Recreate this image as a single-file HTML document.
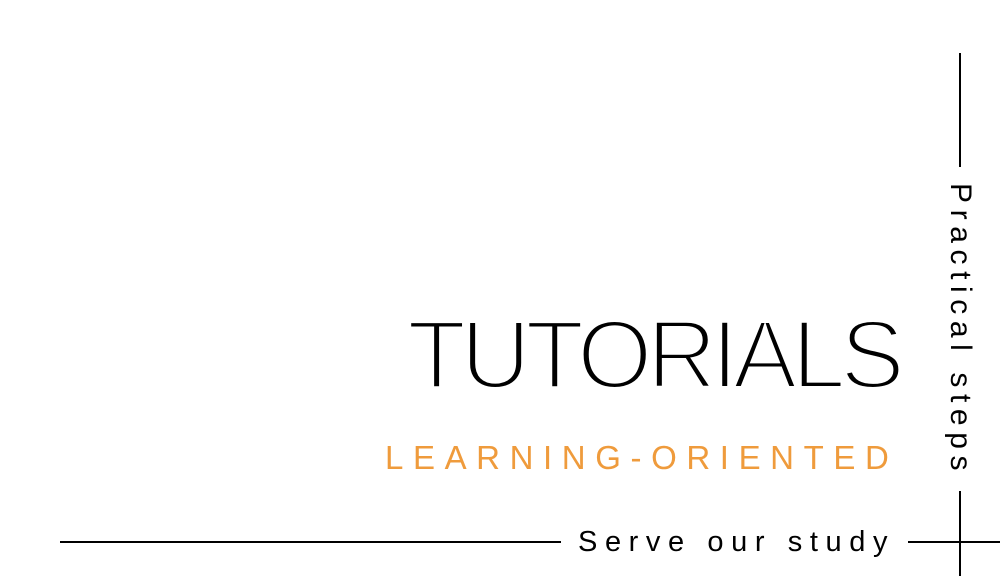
<!DOCTYPE html>
<html><head><meta charset="utf-8"><style>
html,body{margin:0;padding:0;background:#fff;width:1000px;height:576px;overflow:hidden;position:relative;font-family:"Liberation Sans",sans-serif;}
.a{position:absolute;white-space:nowrap;}
.line{position:absolute;background:#000;}
#t{left:407px;top:300px;font-size:97px;line-height:110px;letter-spacing:-5.6px;color:#000;-webkit-text-stroke:4px #fff;}
#l{left:385px;top:438px;font-size:33px;line-height:40px;letter-spacing:9.6px;color:#ef9b3c;}
#s{left:578px;top:524px;font-size:29px;line-height:36px;letter-spacing:7.6px;color:#000;}
#p{left:940px;top:183px;font-size:30px;line-height:40px;letter-spacing:6.6px;writing-mode:vertical-rl;color:#000;}
</style></head><body>
<div class="line" style="left:60px;top:541px;width:501px;height:2px"></div>
<div class="line" style="left:908px;top:541px;width:92px;height:2px"></div>
<div class="line" style="left:959px;top:53px;width:2px;height:114px"></div>
<div class="line" style="left:959px;top:491px;width:2px;height:85px"></div>
<div class="a" id="t">TUTORIALS</div>
<div class="a" id="l">LEARNING-ORIENTED</div>
<div class="a" id="s">Serve our study</div>
<div class="a" id="p">Practical steps</div>
</body></html>
